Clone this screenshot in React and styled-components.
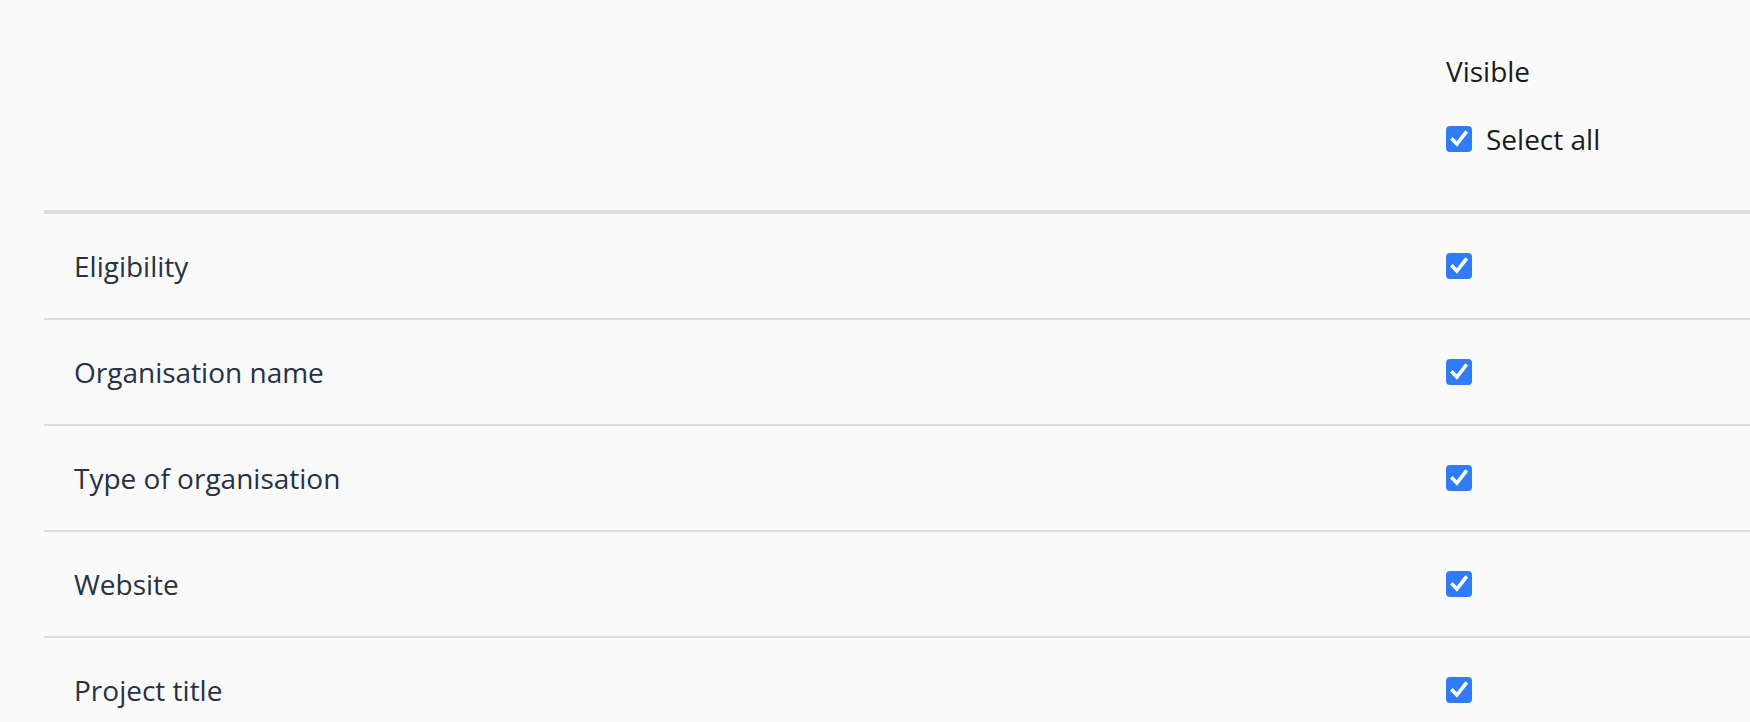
import React, { useState } from 'react';
import styled, { createGlobalStyle } from 'styled-components';

const GlobalStyle = createGlobalStyle`
	html, body {
		margin: 0;
		padding: 0;
		background: #fafafa;
	}
	body {
		font-family: 'Open Sans', 'Noto Sans', sans-serif;
		-webkit-font-smoothing: antialiased;
	}
`;

const Page = styled.div`
	padding-left: 44px;
	background: #fafafa;
	min-height: 722px;
`;

const Row = styled.div`
	display: grid;
	grid-template-columns: 1402px 1fr;
	align-items: center;
	height: ${props => props.height}px;
	border-bottom: ${props => props.border}px solid #dcdcdc;
`;

const HeaderCell = styled.div`
	grid-column: 2;
	display: flex;
	flex-direction: column;
	gap: 30px;
	color: #1a1a1a;
	font-size: 28px;
	line-height: 38px;
`;

const Label = styled.div`
	padding-left: 30px;
	color: #273142;
	font-size: 28px;
	line-height: 38px;
`;

const CheckLabel = styled.label`
	display: flex;
	align-items: center;
	gap: 14px;
	cursor: pointer;
`;

const Box = styled.span`
	display: inline-flex;
	width: 26px;
	height: 26px;
	border-radius: 4px;
	background: ${props => (props.checked ? '#2f7cf6' : '#ffffff')};
	border: ${props => (props.checked ? 'none' : '2px solid #8a8a8a')};
	box-sizing: border-box;
	flex-shrink: 0;
`;

const Checkbox = ({ checked, onChange }) => (
	<Box checked={checked} onClick={onChange}>
		{checked && (
			<svg width="26" height="26" viewBox="0 0 26 26" fill="none">
				<path
					d="M6.6 13.6 L10.9 18 L19.6 6.8"
					stroke="#fff"
					strokeWidth="3.6"
					strokeLinecap="square"
					strokeLinejoin="miter"
				/>
			</svg>
		)}
	</Box>
);

const fields = [
	'Eligibility',
	'Organisation name',
	'Type of organisation',
	'Website',
	'Project title'
];

const App = () => {
	const [visible, setVisible] = useState(fields.map(() => true));
	const allOn = visible.every(Boolean);

	const toggleAll = () => setVisible(fields.map(() => !allOn));
	const toggle = i => setVisible(visible.map((v, j) => (j === i ? !v : v)));

	return (
		<Page>
			<GlobalStyle />
			<Row height={210} border={4}>
				<HeaderCell>
					<span>Visible</span>
					<CheckLabel>
						<Checkbox checked={allOn} onChange={toggleAll} />
						<span>Select all</span>
					</CheckLabel>
				</HeaderCell>
			</Row>
			{fields.map((f, i) => (
				<Row key={f} height={104} border={2}>
					<Label>{f}</Label>
					<Checkbox checked={visible[i]} onChange={() => toggle(i)} />
				</Row>
			))}
		</Page>
	);
};

export default App;
